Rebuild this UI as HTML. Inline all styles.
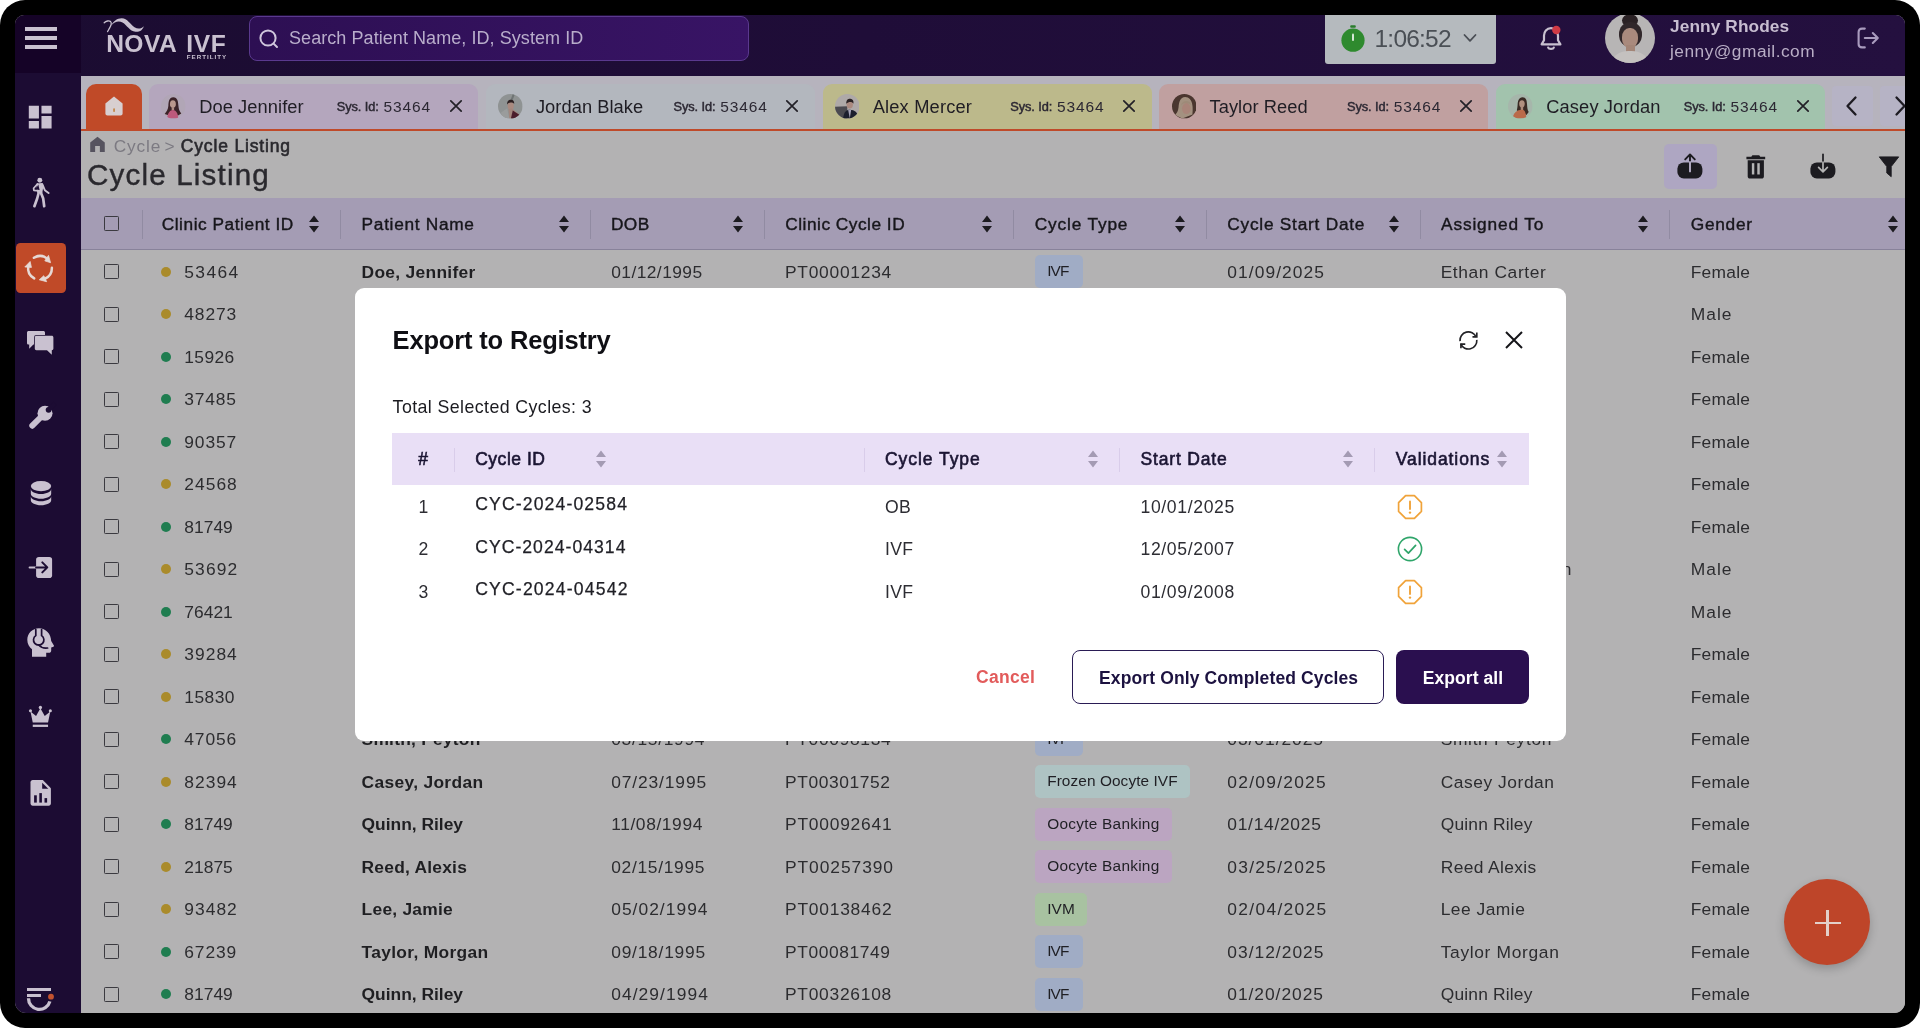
<!DOCTYPE html>
<html lang="en"><head><meta charset="utf-8"><title>Cycle Listing - Export to Registry</title><style>
html,body{margin:0;padding:0;background:#fff;}
body{width:1920px;height:1028px;overflow:hidden;position:relative;font-family:"Liberation Sans",sans-serif;}
.frame{position:absolute;left:0;top:0;width:1920px;height:1028px;background:#000;border-radius:25px;}
.screen{position:absolute;left:15px;top:15px;width:1890px;height:997.500px;border-radius:9px 9px 11px 11px;overflow:hidden;background:#b3b2b3;}
.b{position:absolute;display:block;}
.t{position:absolute;white-space:nowrap;display:block;}
</style></head><body>
<div class="frame"><div class="screen">
<div class="b" style="left:-15px;top:-15px;width:1920px;height:1028px;will-change:transform;">
<div class="b" style="left:81.00px;top:76.00px;width:1824.00px;height:937.00px;background:#b3b2b3;"></div>
<div class="b" style="left:81.00px;top:76.00px;width:1824.00px;height:53.00px;background:#b6b3bd;"></div>
<div class="b" style="left:15.00px;top:15.00px;width:1890.00px;height:61.00px;background:linear-gradient(90deg,#1b0c31 0%,#1f0d38 45%,#24103f 100%);"></div>
<div class="b" style="left:15.00px;top:15.00px;width:66.00px;height:57.50px;background:#150327;"></div>
<div class="b" style="left:15.00px;top:72.50px;width:66.00px;height:941.00px;background:#1c0c33;"></div>
<div class="b" style="left:25.00px;top:27.25px;width:32.00px;height:3.50px;background:#c9c1d0;"></div>
<div class="b" style="left:25.00px;top:36.25px;width:32.00px;height:3.50px;background:#c9c1d0;"></div>
<div class="b" style="left:25.00px;top:45.25px;width:32.00px;height:3.50px;background:#c9c1d0;"></div>
<svg class="b" style="left:103.00px;top:17.00px;" width="42.00" height="17.00" viewBox="0 0 42 17"><path d="M8.200 8.400 C10.500 4 14.500 1.200 18.800 1.300 C24.500 1.500 27 7.200 31.500 10.200 C35 12.400 38.500 11.600 40.800 9.200 C39.800 13 36.500 15.200 32.500 14.800 C26.500 14.200 24 8.200 19.500 5.600 C15.500 3.400 11.500 5 8.200 8.400 Z" fill="#c9c1d0"/><path d="M1.200 5.800 C3 4 6 3.200 7.600 4.600 C9 6 7.800 9 6.400 11.400 C5.600 12.800 4.800 14 4.600 14.600" fill="none" stroke="#c9c1d0" stroke-width="1.300" stroke-linecap="round"/></svg>
<span class="t" style="left:106.20px;top:26.88px;font-size:24.60px;line-height:34px;color:#c9c1d0;font-weight:700;letter-spacing:0.419px;">NOVA</span>
<span class="t" style="left:186.20px;top:26.88px;font-size:24.60px;line-height:34px;color:#c9c1d0;font-weight:700;letter-spacing:0.618px;">IVF</span>
<span class="t" style="left:186.80px;top:52.37px;font-size:6.20px;line-height:9px;color:#c9c1d0;font-weight:700;letter-spacing:1.017px;">FERTILITY</span>
<div class="b" style="left:249.00px;top:16.00px;width:500.00px;height:44.50px;border-radius:8.0px;background:linear-gradient(90deg,#2d0f53 0%,#381465 100%);border:1px solid #5a398e;box-sizing:border-box;"></div>
<svg class="b" style="left:257.00px;top:27.00px;" width="24.00" height="24.00" viewBox="0 0 24 24"><circle cx="11" cy="11" r="7.6" fill="none" stroke="#cfc6dc" stroke-width="2"/><path d="M16.6 16.6 L20 20" stroke="#cfc6dc" stroke-width="2" stroke-linecap="round"/></svg>
<span class="t" style="left:289.00px;top:26.01px;font-size:18.00px;line-height:25px;color:#b9aecb;letter-spacing:0.064px;">Search Patient Name, ID, System ID</span>
<div class="b" style="left:1325.00px;top:15.00px;width:171.00px;height:48.50px;background:#b5babe;border-radius:0 0 3px 3px;"></div>
<svg class="b" style="left:1338.00px;top:24.00px;" width="30.00" height="30.00" viewBox="0 0 30 30"><rect x="12.2" y="1.2" width="5.6" height="2.6" rx="1" fill="#2a7d2c"/><circle cx="15" cy="16.2" r="11.6" fill="#2e8a2e"/><rect x="14" y="9.5" width="2" height="7.5" rx="1" fill="#d5e8d5"/></svg>
<span class="t" style="left:1374.50px;top:22.18px;font-size:24.50px;line-height:34px;color:#4a4f55;letter-spacing:-0.774px;">1:06:52</span>
<svg class="b" style="left:1461.00px;top:30.00px;" width="18.00" height="16.00" viewBox="0 0 18 16"><path d="M3.5 5 L9 10.8 L14.5 5" fill="none" stroke="#4a4e55" stroke-width="1.8" stroke-linecap="round" stroke-linejoin="round"/></svg>
<svg class="b" style="left:1536.00px;top:24.00px;" width="30.00" height="30.00" viewBox="0 0 30 30"><path d="M15 4.2 C10.6 4.2 8 7.6 8 11.6 L8 16.2 L5.6 20.4 L24.4 20.4 L22 16.2 L22 11.6 C22 7.6 19.4 4.2 15 4.2 Z" fill="none" stroke="#c9c1d0" stroke-width="2.2" stroke-linejoin="round"/><path d="M12.2 23.6 C12.8 25.4 17.2 25.4 17.8 23.6" fill="none" stroke="#c9c1d0" stroke-width="2.2" stroke-linecap="round"/><circle cx="20.3" cy="6" r="4.2" fill="#cf3a45"/></svg>
<div class="b" style="left:1605.00px;top:13.20px;width:50.00px;height:50.00px;border-radius:50%;overflow:hidden;background:#b7b5b5;"><div class="b" style="left:17px;top:1px;width:16px;height:13px;border-radius:50%;background:#2a2124"></div><div class="b" style="left:13.500px;top:9px;width:23px;height:25px;border-radius:48%;background:#30272a"></div><div class="b" style="left:17px;top:15px;width:16px;height:20px;border-radius:45%;background:#a98a7d"></div><div class="b" style="left:20.500px;top:32px;width:9px;height:8px;background:#a38577"></div><div class="b" style="left:8px;top:38px;width:34px;height:22px;border-radius:45% 45% 0 0;background:#c4c1bf"></div></div>
<span class="t" style="left:1670.00px;top:14.20px;font-size:17.30px;line-height:24px;color:#c7bdd0;font-weight:700;letter-spacing:0.094px;">Jenny Rhodes</span>
<span class="t" style="left:1670.00px;top:38.70px;font-size:17.30px;line-height:24px;color:#b9aec6;letter-spacing:0.502px;">jenny@gmail.com</span>
<svg class="b" style="left:1853.50px;top:24.00px;" width="28.00" height="28.00" viewBox="0 0 28 28"><path d="M10.800 4.600 L8 4.600 C5.800 4.600 4.600 5.800 4.600 8 L4.600 20 C4.600 22.200 5.800 23.400 8 23.400 L10.800 23.400" fill="none" stroke="#a99bbe" stroke-width="2.100" stroke-linecap="round"/><path d="M10.800 14 L23.600 14 M18.800 9 L23.800 14 L18.800 19" fill="none" stroke="#a99bbe" stroke-width="2.100" stroke-linecap="round" stroke-linejoin="round"/></svg>
<svg class="b" style="left:25.10px;top:102.20px;" width="30.40" height="30.40" viewBox="0 0 24 24"><path d="M3 13h8V3H3v10zm0 8h8v-6H3v6zm10 0h8V11h-8v10zm0-18v6h8V3h-8z" fill="#c9c1d0"/></svg>
<svg class="b" style="left:28.00px;top:174.00px;" width="26.00" height="36.00" viewBox="28 174 26 36"><circle cx="39.800" cy="180.200" r="2.450" fill="#c9c1d0"/><path d="M37 184 L42.300 183.700 L42.600 187 L41.800 192.300 L37.800 192.300 Z" fill="#c9c1d0" stroke="#c9c1d0" stroke-width="1.200" stroke-linejoin="round"/><path d="M38.300 184.400 L35.600 189.600 L39.600 190" fill="#1c0c33"/><path d="M37.400 184 L33.600 188.200 L33.900 190.400 L38.600 190.800" fill="none" stroke="#c9c1d0" stroke-width="1.700" stroke-linecap="round" stroke-linejoin="round"/><path d="M42.500 184.600 L44.800 190.200 L48.600 193.100" fill="none" stroke="#c9c1d0" stroke-width="1.900" stroke-linecap="round" stroke-linejoin="round"/><path d="M38.900 192 L37.200 198.500 L34.400 206.200" fill="none" stroke="#c9c1d0" stroke-width="2.700" stroke-linecap="round" stroke-linejoin="round"/><path d="M40.600 192 L43.200 198.600 L44.200 206.200" fill="none" stroke="#c9c1d0" stroke-width="2.700" stroke-linecap="round" stroke-linejoin="round"/></svg>
<div class="b" style="left:15.90px;top:242.50px;width:50.10px;height:50.10px;background:#c04a28;border-radius:4.5px;"></div>
<svg class="b" style="left:24.30px;top:252.10px;" width="32.00" height="32.00" viewBox="24.30 252.10 32 32"><path d="M34.17 257.90 A11.90 11.90 0 0 1 47.63 258.72" fill="none" stroke="#e6d9d5" stroke-width="2.50" stroke-linecap="round"/><path d="M48.80 255.50 L45.11 260.97 L50.87 262.80 Z" fill="#e6d9d5" stroke="#e6d9d5" stroke-width="0.8" stroke-linejoin="round"/><path d="M52.20 267.89 A11.90 11.90 0 0 1 44.76 279.13" fill="none" stroke="#e6d9d5" stroke-width="2.50" stroke-linecap="round"/><path d="M46.96 281.76 L44.07 275.83 L39.60 279.90 Z" fill="#e6d9d5" stroke="#e6d9d5" stroke-width="0.8" stroke-linejoin="round"/><path d="M34.53 278.51 A11.90 11.90 0 0 1 28.52 266.44" fill="none" stroke="#e6d9d5" stroke-width="2.50" stroke-linecap="round"/><path d="M25.14 267.04 L31.72 267.50 L30.43 261.60 Z" fill="#e6d9d5" stroke="#e6d9d5" stroke-width="0.8" stroke-linejoin="round"/></svg>
<svg class="b" style="left:27.30px;top:330.80px;" width="26.40" height="24.00" viewBox="0 0 26.400 24"><path d="M1.600 0 H16.400 c.9 0 1.600.7 1.600 1.600 V12 c0 .9-.7 1.600-1.600 1.600 H6.400 L2.200 17.800 V13.600 H1.600 C.7 13.600 0 12.900 0 12 V1.600 C0 .7.7 0 1.600 0z" fill="#c9c1d0"/><path d="M9.400 4.800 H24.800 c.9 0 1.600.7 1.600 1.600 V17.600 c0 .9-.7 1.600-1.600 1.600 V23.800 L20 19.200 H9.400 c-.9 0-1.600-.7-1.600-1.600 V6.400 c0-.9.7-1.600 1.600-1.600z" fill="#c9c1d0" stroke="#1b0c30" stroke-width="1.500" paint-order="stroke"/></svg>
<svg class="b" style="left:24.00px;top:400.00px;" width="34.00" height="34.00" viewBox="24 400 34 34"><path d="M32.300 425.700 L42.500 415.500" stroke="#c9c1d0" stroke-width="6" stroke-linecap="round"/><circle cx="45" cy="413.300" r="7.500" fill="#c9c1d0"/><circle cx="48.600" cy="409.800" r="2.900" fill="#1c0c33"/><path d="M49.200 409.200 L55 403.400" stroke="#1c0c33" stroke-width="4.600"/></svg>
<svg class="b" style="left:27.50px;top:480.00px;" width="26.00" height="26.00" viewBox="0 0 24 24"><ellipse cx="12" cy="5.600" rx="9.400" ry="4.700" fill="#c9c1d0"/><path d="M2.600 8.400 v4.200 c0 2.500 4.200 4.600 9.400 4.600 s9.400-2.100 9.400-4.600 V8.400 c0 2.500-4.200 4.600-9.400 4.600 s-9.400-2.100-9.400-4.600z" fill="#c9c1d0"/><path d="M2.600 15 v3.800 c0 2.500 4.200 4.600 9.400 4.600 s9.400-2.100 9.400-4.600 v-3.800 c0 2.500-4.200 4.600-9.400 4.600 s-9.400-2.100-9.400-4.600z" fill="#c9c1d0"/></svg>
<svg class="b" style="left:26.00px;top:554.00px;" width="30.00" height="28.00" viewBox="26 554 30 28"><rect x="36.100" y="556.900" width="16" height="21.100" rx="2.800" fill="#c9c1d0"/><path d="M29.600 567.400 H36.500" stroke="#c9c1d0" stroke-width="2" stroke-linecap="round"/><path d="M36.100 567.400 H47 M42.300 562.400 L47.300 567.400 L42.300 572.400" fill="none" stroke="#1c0c33" stroke-width="2" stroke-linecap="round" stroke-linejoin="round"/></svg>
<svg class="b" style="left:24.00px;top:624.00px;" width="34.00" height="36.00" viewBox="24 624 34 36"><path d="M39 628.200 C32.500 628.200 27.300 633.300 27.300 639.800 c0 4 2 7.400 4.700 9.400 V656.800 H46.200 V652.800 h2.600 c1.400 0 2.400-1 2.400-2.400 V647.600 l2.300-.9 c.5-.2.600-.7.400-1.100 L51.200 641 C51 633.800 45.800 628.200 39 628.200z" fill="#c9c1d0"/><g fill="none" stroke="#1c0c33" stroke-width="1.700" stroke-linecap="round"><path d="M35.800 629.600 V635.600 A5.200 5.200 0 1 0 41.600 635.600 V629.600"/><path d="M38.700 645 C41 647.600 44.500 648.400 47.600 648"/></g></svg>
<svg class="b" style="left:28.30px;top:704.30px;" width="24.80" height="24.80" viewBox="0 0 24 24"><path d="M2.400 7.200 L7.800 11.600 L12 4.200 L16.200 11.600 L21.600 7.200 L19.400 18 H4.600 Z" fill="#c9c1d0"/><circle cx="2.400" cy="6.600" r="1.500" fill="#c9c1d0"/><circle cx="12" cy="3.400" r="1.600" fill="#c9c1d0"/><circle cx="21.600" cy="6.600" r="1.500" fill="#c9c1d0"/><rect x="4.600" y="20" width="14.800" height="2.200" fill="#c9c1d0"/></svg>
<svg class="b" style="left:28.00px;top:778.00px;" width="26.00" height="30.00" viewBox="28 778 26 30"><path d="M32.700 780 H42.800 L50.900 788.300 V803.500 c0 1.200-1 2.200-2.200 2.200 H32.700 c-1.200 0-2.200-1-2.200-2.200 V782.200 c0-1.200 1-2.200 2.200-2.200z" fill="#c9c1d0"/><path d="M42.200 782.800 V788.800 H48.300 Z" fill="#1c0c33"/><g fill="#1c0c33"><rect x="34.100" y="795.300" width="2.700" height="7.300"/><rect x="39.300" y="793.100" width="2.600" height="9.500"/><rect x="44.500" y="798.100" width="2.600" height="4.500"/></g></svg>
<div class="b" style="left:26.90px;top:988.10px;width:24.10px;height:3.30px;background:#c9c1d0;"></div>
<div class="b" style="left:26.90px;top:993.75px;width:14.20px;height:3.30px;background:#c9c1d0;"></div>
<svg class="b" style="left:20.00px;top:985.00px;" width="40.00" height="30.00" viewBox="20 985 40 30"><path d="M28.500 998.300 A10.900 10.900 0 0 0 49.900 1001.400" fill="none" stroke="#c9c1d0" stroke-width="3.300"/><circle cx="51" cy="996.700" r="2.900" fill="#c4532f"/></svg>
<div class="b" style="left:86.00px;top:84.00px;width:55.50px;height:45.00px;background:#c04a28;border-radius:10px 10px 0 0;"></div>
<svg class="b" style="left:101.50px;top:94.20px;" width="24.00" height="24.00" viewBox="0 0 24 24"><path d="M12 2.600 L3.400 9.400 V19.400 c0 1.100.9 2 2 2 H18.600 c1.100 0 2-.9 2-2 V9.400 Z" fill="#d8cfd0"/><rect x="11.300" y="14.200" width="1.500" height="3.800" rx=".7" fill="#c07a30"/></svg>
<div class="b" style="left:81.00px;top:128.50px;width:1824.00px;height:2.90px;background:#bf4a2a;"></div>
<div class="b" style="left:149.00px;top:84.00px;width:329.00px;height:45.00px;background:#b4a6bd;border-radius:9px 9px 0 0;"></div>
<svg class="b" style="left:161.30px;top:94.00px;" width="24.60" height="24.60" viewBox="0 0 24 24"><defs><clipPath id="av1"><circle cx="12" cy="12" r="12"/></clipPath></defs><g clip-path="url(#av1)"><rect width="24" height="24" fill="#b1a6b6"/><path d="M12 3.200 C7.800 3.200 7.400 7.600 7.200 11.400 C7 15 5.200 17.400 3.600 19.400 L8 21 L16.600 21 L19.800 19 C18 16.800 17.200 14.600 17 11.400 C16.800 7.600 16.200 3.200 12 3.200z" fill="#3b2328"/><ellipse cx="11.600" cy="9.800" rx="2.900" ry="3.700" fill="#b9978d"/><rect x="10.400" y="12.800" width="2.400" height="3" fill="#b08d84"/><path d="M6 24 C6.200 18.600 9 15.600 11.600 15.600 C14.400 15.600 16.600 18.400 16.800 24z" fill="#bd5a7c"/></g></svg>
<span class="t" style="left:199.20px;top:93.51px;font-size:18.30px;line-height:26px;color:#1f1d24;letter-spacing:0.078px;">Doe Jennifer</span>
<span class="t" style="left:336.80px;top:97.95px;font-size:12.80px;line-height:18px;color:#2c2833;letter-spacing:-0.086px;-webkit-text-stroke:0.450px #2c2833;">Sys. Id:</span>
<span class="t" style="left:383.50px;top:95.78px;font-size:15.50px;line-height:22px;color:#2c2833;letter-spacing:0.849px;">53464</span>
<svg class="b" style="left:447.50px;top:98.00px;" width="16.00" height="16.00" viewBox="0 0 16 16"><path d="M2.800 2.800 L13.200 13.200 M13.200 2.800 L2.800 13.200" stroke="#222027" stroke-width="1.700" stroke-linecap="round"/></svg>
<div class="b" style="left:485.75px;top:84.00px;width:329.00px;height:45.00px;background:#b3b7be;border-radius:9px 9px 0 0;"></div>
<svg class="b" style="left:498.05px;top:94.00px;" width="24.60" height="24.60" viewBox="0 0 24 24"><defs><clipPath id="av2"><circle cx="12" cy="12" r="12"/></clipPath></defs><g clip-path="url(#av2)"><rect width="24" height="24" fill="#8f9393"/><rect x="13" y="0" width="2" height="9" fill="#6f7474" transform="rotate(20 14 4)"/><ellipse cx="12.400" cy="11.400" rx="3" ry="3.800" fill="#a98a80"/><path d="M8.800 10.200 C8.800 6.600 11 5.400 12.800 5.600 C15 5.800 16 7.400 15.800 9.600 C14.600 8.200 11.600 7.800 10 9 z" fill="#2b1f21"/><path d="M10.200 15 L13.400 14 L21 20 L17 24 L11 24 z" fill="#a3867d"/><path d="M12.600 24 L14.400 16 L22 21 L20 24z" fill="#4b1d2c"/><path d="M3 18 L9 14 L11 24 L4 24z" fill="#9a9c9c"/></g></svg>
<span class="t" style="left:535.95px;top:93.51px;font-size:18.30px;line-height:26px;color:#1f1d24;letter-spacing:0.046px;">Jordan Blake</span>
<span class="t" style="left:673.55px;top:97.95px;font-size:12.80px;line-height:18px;color:#2c2833;letter-spacing:-0.086px;-webkit-text-stroke:0.450px #2c2833;">Sys. Id:</span>
<span class="t" style="left:720.25px;top:95.78px;font-size:15.50px;line-height:22px;color:#2c2833;letter-spacing:0.849px;">53464</span>
<svg class="b" style="left:784.25px;top:98.00px;" width="16.00" height="16.00" viewBox="0 0 16 16"><path d="M2.800 2.800 L13.200 13.200 M13.200 2.800 L2.800 13.200" stroke="#222027" stroke-width="1.700" stroke-linecap="round"/></svg>
<div class="b" style="left:822.50px;top:84.00px;width:329.00px;height:45.00px;background:#bcb98b;border-radius:9px 9px 0 0;"></div>
<svg class="b" style="left:834.80px;top:94.00px;" width="24.60" height="24.60" viewBox="0 0 24 24"><defs><clipPath id="av3"><circle cx="12" cy="12" r="12"/></clipPath></defs><g clip-path="url(#av3)"><rect width="24" height="24" fill="#aea9a8"/><path d="M0 12.500 L12 12 L12 24 L0 24z" fill="#4b4a50"/><path d="M8 24 C8.500 17.500 11 15.400 14.600 15.400 C19 15.400 22.400 18 23 24z" fill="#1c1f2e"/><path d="M12.800 15.400 L14.400 24 L15.800 15.400z" fill="#a6a3b8"/><ellipse cx="14.400" cy="10.200" rx="3.100" ry="4" fill="#ab8a80"/><path d="M11 9.400 C10.800 5.600 13 4.400 15 4.600 C17.400 4.800 18.400 6.800 18 9.400 C17 7.400 13.400 7 11 9.400z" fill="#2a2224"/></g></svg>
<span class="t" style="left:872.70px;top:93.51px;font-size:18.30px;line-height:26px;color:#1f1d24;letter-spacing:0.170px;">Alex Mercer</span>
<span class="t" style="left:1010.30px;top:97.95px;font-size:12.80px;line-height:18px;color:#2c2833;letter-spacing:-0.086px;-webkit-text-stroke:0.450px #2c2833;">Sys. Id:</span>
<span class="t" style="left:1057.00px;top:95.78px;font-size:15.50px;line-height:22px;color:#2c2833;letter-spacing:0.849px;">53464</span>
<svg class="b" style="left:1121.00px;top:98.00px;" width="16.00" height="16.00" viewBox="0 0 16 16"><path d="M2.800 2.800 L13.200 13.200 M13.200 2.800 L2.800 13.200" stroke="#222027" stroke-width="1.700" stroke-linecap="round"/></svg>
<div class="b" style="left:1159.25px;top:84.00px;width:329.00px;height:45.00px;background:#c0a0a0;border-radius:9px 9px 0 0;"></div>
<svg class="b" style="left:1171.55px;top:94.00px;" width="24.60" height="24.60" viewBox="0 0 24 24"><defs><clipPath id="av4"><circle cx="12" cy="12" r="12"/></clipPath></defs><g clip-path="url(#av4)"><rect width="24" height="24" fill="#4a362f"/><path d="M12.800 3 C8 3 6.800 8 6.400 13 C6 17 4.600 19 3 20.400 L10 24 L20 20 C20.600 14 20.800 3.400 12.800 3z" fill="#a39180"/><ellipse cx="14" cy="14.200" rx="4.200" ry="5.400" fill="#a98479"/><path d="M8.600 11.600 C10 8.600 15 7.600 19 11 C18 6 10 5 8.600 11.600z" fill="#9e8a78"/></g></svg>
<span class="t" style="left:1209.45px;top:93.51px;font-size:18.30px;line-height:26px;color:#1f1d24;letter-spacing:0.067px;">Taylor Reed</span>
<span class="t" style="left:1347.05px;top:97.95px;font-size:12.80px;line-height:18px;color:#2c2833;letter-spacing:-0.086px;-webkit-text-stroke:0.450px #2c2833;">Sys. Id:</span>
<span class="t" style="left:1393.75px;top:95.78px;font-size:15.50px;line-height:22px;color:#2c2833;letter-spacing:0.849px;">53464</span>
<svg class="b" style="left:1457.75px;top:98.00px;" width="16.00" height="16.00" viewBox="0 0 16 16"><path d="M2.800 2.800 L13.200 13.200 M13.200 2.800 L2.800 13.200" stroke="#222027" stroke-width="1.700" stroke-linecap="round"/></svg>
<div class="b" style="left:1496.00px;top:84.00px;width:329.00px;height:45.00px;background:#a2c3ad;border-radius:9px 9px 0 0;"></div>
<svg class="b" style="left:1508.30px;top:94.00px;" width="24.60" height="24.60" viewBox="0 0 24 24"><defs><clipPath id="av5"><circle cx="12" cy="12" r="12"/></clipPath></defs><g clip-path="url(#av5)"><rect width="24" height="24" fill="#a6b6ab"/><path d="M14.200 3.200 C10.400 3.200 9.600 7 9.400 10.600 C9.200 13.400 8.800 15 8.600 16 L18 20.400 L20.200 17.600 C18.800 15.400 18.800 12.600 18.600 10.200 C18.400 6.600 17.800 3.200 14.200 3.200z" fill="#3a2a24"/><ellipse cx="13.600" cy="9.600" rx="2.700" ry="3.600" fill="#b0907f"/><rect x="12.400" y="12.400" width="2.400" height="3.400" fill="#ab8a7a"/><path d="M4.600 24 C5 18.400 9 15.400 13.600 15.400 C16.400 15.400 17.600 18 17.800 24z" fill="#ba6a4a"/></g></svg>
<span class="t" style="left:1546.20px;top:93.51px;font-size:18.30px;line-height:26px;color:#1f1d24;letter-spacing:0.128px;">Casey Jordan</span>
<span class="t" style="left:1683.80px;top:97.95px;font-size:12.80px;line-height:18px;color:#2c2833;letter-spacing:-0.086px;-webkit-text-stroke:0.450px #2c2833;">Sys. Id:</span>
<span class="t" style="left:1730.50px;top:95.78px;font-size:15.50px;line-height:22px;color:#2c2833;letter-spacing:0.849px;">53464</span>
<svg class="b" style="left:1794.50px;top:98.00px;" width="16.00" height="16.00" viewBox="0 0 16 16"><path d="M2.800 2.800 L13.200 13.200 M13.200 2.800 L2.800 13.200" stroke="#222027" stroke-width="1.700" stroke-linecap="round"/></svg>
<div class="b" style="left:1832.00px;top:86.00px;width:40.50px;height:40.00px;background:#b6b3c5;border-radius:4.0px;"></div>
<svg class="b" style="left:1840.00px;top:94.00px;" width="24.00" height="24.00" viewBox="0 0 24 24"><path d="M15.500 3.500 L7.500 12 L15.500 20.500" fill="none" stroke="#1d1b22" stroke-width="2.300" stroke-linecap="round" stroke-linejoin="round"/></svg>
<div class="b" style="left:1880.00px;top:86.00px;width:40.50px;height:40.00px;background:#b6b3c5;border-radius:4.0px;"></div>
<svg class="b" style="left:1888.00px;top:94.00px;" width="24.00" height="24.00" viewBox="0 0 24 24"><path d="M8.500 3.500 L16.500 12 L8.500 20.500" fill="none" stroke="#1d1b22" stroke-width="2.300" stroke-linecap="round" stroke-linejoin="round"/></svg>
<svg class="b" style="left:88.00px;top:135.30px;" width="19.00" height="19.00" viewBox="0 0 24 24"><path d="M12 2.200 L2.800 9.600 V21.500 H9 V14 h6 v7.500 h6.200 V9.600 Z" fill="#56535f"/></svg>
<span class="t" style="left:113.70px;top:134.20px;font-size:17.30px;line-height:24px;color:#7c7a82;letter-spacing:0.880px;">Cycle</span>
<span class="t" style="left:164.50px;top:134.20px;font-size:17.30px;line-height:24px;color:#7c7a82;">&gt;</span>
<span class="t" style="left:180.80px;top:134.00px;font-size:17.50px;line-height:24px;color:#2a292e;letter-spacing:0.840px;-webkit-text-stroke:0.600px #2a292e;">Cycle Listing</span>
<span class="t" style="left:87.00px;top:154.44px;font-size:29.60px;line-height:41px;color:#2a292e;letter-spacing:1.169px;-webkit-text-stroke:0.400px #2a292e;">Cycle Listing</span>
<div class="b" style="left:1663.50px;top:144.00px;width:53.50px;height:44.70px;background:#aea6c2;border-radius:5.0px;"></div>
<svg class="b" style="left:1675.00px;top:152.00px;" width="30.00" height="30.00" viewBox="0 0 30 30"><rect x="2.400" y="10.400" width="25" height="16" rx="6.400" fill="#1c1b20"/><path d="M15 3 V10.400 M10.200 7.400 L15 2.400 L19.800 7.400" fill="none" stroke="#1c1b20" stroke-width="1.900" stroke-linecap="round" stroke-linejoin="round"/><path d="M15 10 V19.400" stroke="#b8b0c9" stroke-width="1.900" stroke-linecap="round"/></svg>
<svg class="b" style="left:1743.30px;top:153.70px;" width="25.60" height="25.60" viewBox="0 0 24 24"><path d="M8.800 1.200 h6.400 l1 1.300 h4.600 v2.400 H3.200 V2.500 h4.600z" fill="#1c1b20"/><path d="M4.400 5.900 H19.600 V21 c0 1.100-.9 2-2 2 H6.400 c-1.100 0-2-.9-2-2z" fill="#1c1b20"/><rect x="8.300" y="8.600" width="2.300" height="10.600" fill="#b5b5b5"/><rect x="13.400" y="8.600" width="2.300" height="10.600" fill="#b5b5b5"/></svg>
<svg class="b" style="left:1807.50px;top:152.00px;" width="30.00" height="30.00" viewBox="0 0 30 30"><rect x="2.400" y="10.400" width="25" height="16" rx="6.400" fill="#1c1b20"/><path d="M15 2.400 V10.400" stroke="#1c1b20" stroke-width="1.700" stroke-linecap="round"/><path d="M15 10 V19.600 M10.600 15.400 L15 19.800 L19.400 15.400" fill="none" stroke="#b5b5b5" stroke-width="1.700" stroke-linecap="round" stroke-linejoin="round"/></svg>
<svg class="b" style="left:1878.00px;top:153.50px;" width="22.00" height="25.00" viewBox="0 0 24 25"><path d="M1.400 2 H22.600 L14.400 12.600 V23.600 L9.600 19.600 V12.600 Z" fill="#1c1b20" stroke="#1c1b20" stroke-width="1" stroke-linejoin="round"/></svg>
<div class="b" style="left:81.00px;top:197.50px;width:1824.00px;height:51.50px;background:#a49cb4;"></div>
<div class="b" style="left:81.00px;top:248.70px;width:1824.00px;height:1.00px;background:#88829a;"></div>
<div class="b" style="left:104.00px;top:216.30px;width:15.00px;height:15.00px;border-radius:1.3px;border:1.400px solid #3b3a40;box-sizing:border-box;"></div>
<div class="b" style="left:141.60px;top:210.00px;width:1.00px;height:29.00px;background:#918ba2;"></div>
<span class="t" style="left:161.70px;top:211.90px;font-size:17.30px;line-height:24px;color:#17161b;letter-spacing:0.544px;-webkit-text-stroke:0.400px #17161b;">Clinic Patient ID</span>
<svg class="b" style="left:308.00px;top:213.60px;" width="12.00" height="20.00" viewBox="0 0 12 20"><path d="M6 1.600 L11 8 H1 Z M6 18.400 L1 12 H11 Z" fill="#1c1b20"/></svg>
<div class="b" style="left:340.20px;top:210.00px;width:1.00px;height:29.00px;background:#918ba2;"></div>
<span class="t" style="left:361.60px;top:211.90px;font-size:17.30px;line-height:24px;color:#17161b;letter-spacing:0.697px;-webkit-text-stroke:0.400px #17161b;">Patient Name</span>
<svg class="b" style="left:557.70px;top:213.60px;" width="12.00" height="20.00" viewBox="0 0 12 20"><path d="M6 1.600 L11 8 H1 Z M6 18.400 L1 12 H11 Z" fill="#1c1b20"/></svg>
<div class="b" style="left:589.60px;top:210.00px;width:1.00px;height:29.00px;background:#918ba2;"></div>
<span class="t" style="left:611.00px;top:211.90px;font-size:17.30px;line-height:24px;color:#17161b;letter-spacing:0.394px;-webkit-text-stroke:0.400px #17161b;">DOB</span>
<svg class="b" style="left:731.50px;top:213.60px;" width="12.00" height="20.00" viewBox="0 0 12 20"><path d="M6 1.600 L11 8 H1 Z M6 18.400 L1 12 H11 Z" fill="#1c1b20"/></svg>
<div class="b" style="left:763.90px;top:210.00px;width:1.00px;height:29.00px;background:#918ba2;"></div>
<span class="t" style="left:785.30px;top:211.90px;font-size:17.30px;line-height:24px;color:#17161b;letter-spacing:0.501px;-webkit-text-stroke:0.400px #17161b;">Clinic Cycle ID</span>
<svg class="b" style="left:981.40px;top:213.60px;" width="12.00" height="20.00" viewBox="0 0 12 20"><path d="M6 1.600 L11 8 H1 Z M6 18.400 L1 12 H11 Z" fill="#1c1b20"/></svg>
<div class="b" style="left:1013.10px;top:210.00px;width:1.00px;height:29.00px;background:#918ba2;"></div>
<span class="t" style="left:1034.80px;top:211.90px;font-size:17.30px;line-height:24px;color:#17161b;letter-spacing:0.835px;-webkit-text-stroke:0.400px #17161b;">Cycle Type</span>
<svg class="b" style="left:1173.80px;top:213.60px;" width="12.00" height="20.00" viewBox="0 0 12 20"><path d="M6 1.600 L11 8 H1 Z M6 18.400 L1 12 H11 Z" fill="#1c1b20"/></svg>
<div class="b" style="left:1205.60px;top:210.00px;width:1.00px;height:29.00px;background:#918ba2;"></div>
<span class="t" style="left:1227.30px;top:211.90px;font-size:17.30px;line-height:24px;color:#17161b;letter-spacing:0.755px;-webkit-text-stroke:0.400px #17161b;">Cycle Start Date</span>
<svg class="b" style="left:1387.60px;top:213.60px;" width="12.00" height="20.00" viewBox="0 0 12 20"><path d="M6 1.600 L11 8 H1 Z M6 18.400 L1 12 H11 Z" fill="#1c1b20"/></svg>
<div class="b" style="left:1419.60px;top:210.00px;width:1.00px;height:29.00px;background:#918ba2;"></div>
<span class="t" style="left:1441.00px;top:211.90px;font-size:17.30px;line-height:24px;color:#17161b;letter-spacing:0.864px;-webkit-text-stroke:0.400px #17161b;">Assigned To</span>
<svg class="b" style="left:1637.20px;top:213.60px;" width="12.00" height="20.00" viewBox="0 0 12 20"><path d="M6 1.600 L11 8 H1 Z M6 18.400 L1 12 H11 Z" fill="#1c1b20"/></svg>
<div class="b" style="left:1669.30px;top:210.00px;width:1.00px;height:29.00px;background:#918ba2;"></div>
<span class="t" style="left:1690.70px;top:211.90px;font-size:17.30px;line-height:24px;color:#17161b;letter-spacing:0.755px;-webkit-text-stroke:0.400px #17161b;">Gender</span>
<svg class="b" style="left:1886.80px;top:213.60px;" width="12.00" height="20.00" viewBox="0 0 12 20"><path d="M6 1.600 L11 8 H1 Z M6 18.400 L1 12 H11 Z" fill="#1c1b20"/></svg>
<div class="b" style="left:104.00px;top:264.20px;width:15.00px;height:15.00px;border-radius:1.3px;border:1.400px solid #3b3a40;box-sizing:border-box;"></div>
<div class="b" style="left:161.00px;top:266.90px;width:10.00px;height:10.00px;background:#aa8b2b;border-radius:50%;"></div>
<span class="t" style="left:184.30px;top:259.50px;font-size:17.40px;line-height:24px;color:#2c2c2f;letter-spacing:1.374px;">53464</span>
<span class="t" style="left:361.60px;top:259.50px;font-size:17.40px;line-height:24px;color:#1f1f22;font-weight:700;letter-spacing:0.296px;">Doe, Jennifer</span>
<span class="t" style="left:611.20px;top:259.50px;font-size:17.40px;line-height:24px;color:#2c2c2f;letter-spacing:0.433px;">01/12/1995</span>
<span class="t" style="left:785.00px;top:259.50px;font-size:17.40px;line-height:24px;color:#2c2c2f;letter-spacing:0.737px;">PT00001234</span>
<div class="b" style="left:1034.50px;top:255.20px;width:48.50px;height:33.00px;background:#a0acc5;border-radius:5.0px;"></div>
<span class="t" style="left:1047.20px;top:260.28px;font-size:15.40px;line-height:22px;color:#1f1f24;letter-spacing:-0.882px;">IVF</span>
<span class="t" style="left:1227.30px;top:259.50px;font-size:17.40px;line-height:24px;color:#2c2c2f;letter-spacing:1.077px;">01/09/2025</span>
<span class="t" style="left:1440.70px;top:259.50px;font-size:17.40px;line-height:24px;color:#2c2c2f;letter-spacing:0.585px;">Ethan Carter</span>
<span class="t" style="left:1690.70px;top:259.50px;font-size:17.40px;line-height:24px;color:#2c2c2f;letter-spacing:0.252px;">Female</span>
<div class="b" style="left:104.00px;top:306.70px;width:15.00px;height:15.00px;border-radius:1.3px;border:1.400px solid #3b3a40;box-sizing:border-box;"></div>
<div class="b" style="left:161.00px;top:309.40px;width:10.00px;height:10.00px;background:#aa8b2b;border-radius:50%;"></div>
<span class="t" style="left:184.30px;top:302.00px;font-size:17.40px;line-height:24px;color:#2c2c2f;letter-spacing:0.874px;">48273</span>
<span class="t" style="left:361.60px;top:302.00px;font-size:17.40px;line-height:24px;color:#1f1f22;font-weight:700;letter-spacing:0.100px;">Blake, Jordan</span>
<span class="t" style="left:611.20px;top:302.00px;font-size:17.40px;line-height:24px;color:#2c2c2f;letter-spacing:0.700px;">03/22/1993</span>
<span class="t" style="left:785.00px;top:302.00px;font-size:17.40px;line-height:24px;color:#2c2c2f;letter-spacing:0.800px;">PT00004521</span>
<div class="b" style="left:1034.50px;top:297.70px;width:48.50px;height:33.00px;background:#a0acc5;border-radius:5.0px;"></div>
<span class="t" style="left:1047.20px;top:302.78px;font-size:15.40px;line-height:22px;color:#1f1f24;letter-spacing:-0.882px;">IVF</span>
<span class="t" style="left:1227.30px;top:302.00px;font-size:17.40px;line-height:24px;color:#2c2c2f;letter-spacing:0.800px;">01/11/2025</span>
<span class="t" style="left:1440.70px;top:302.00px;font-size:17.40px;line-height:24px;color:#2c2c2f;letter-spacing:0.300px;">Logan Pierce</span>
<span class="t" style="left:1690.70px;top:302.00px;font-size:17.40px;line-height:24px;color:#2c2c2f;letter-spacing:1.022px;">Male</span>
<div class="b" style="left:104.00px;top:349.20px;width:15.00px;height:15.00px;border-radius:1.3px;border:1.400px solid #3b3a40;box-sizing:border-box;"></div>
<div class="b" style="left:161.00px;top:351.90px;width:10.00px;height:10.00px;background:#1f7d50;border-radius:50%;"></div>
<span class="t" style="left:184.30px;top:344.50px;font-size:17.40px;line-height:24px;color:#2c2c2f;letter-spacing:0.399px;">15926</span>
<span class="t" style="left:361.60px;top:344.50px;font-size:17.40px;line-height:24px;color:#1f1f22;font-weight:700;letter-spacing:0.100px;">Mercer, Alex</span>
<span class="t" style="left:611.20px;top:344.50px;font-size:17.40px;line-height:24px;color:#2c2c2f;letter-spacing:0.700px;">08/05/1994</span>
<span class="t" style="left:785.00px;top:344.50px;font-size:17.40px;line-height:24px;color:#2c2c2f;letter-spacing:0.800px;">PT00012876</span>
<div class="b" style="left:1034.50px;top:340.20px;width:52.70px;height:33.00px;background:#a8c2a1;border-radius:5.0px;"></div>
<span class="t" style="left:1047.20px;top:345.28px;font-size:15.40px;line-height:22px;color:#1f1f24;letter-spacing:0.157px;">IVM</span>
<span class="t" style="left:1227.30px;top:344.50px;font-size:17.40px;line-height:24px;color:#2c2c2f;letter-spacing:0.800px;">01/15/2025</span>
<span class="t" style="left:1440.70px;top:344.50px;font-size:17.40px;line-height:24px;color:#2c2c2f;letter-spacing:0.585px;">Ethan Carter</span>
<span class="t" style="left:1690.70px;top:344.50px;font-size:17.40px;line-height:24px;color:#2c2c2f;letter-spacing:0.252px;">Female</span>
<div class="b" style="left:104.00px;top:391.70px;width:15.00px;height:15.00px;border-radius:1.3px;border:1.400px solid #3b3a40;box-sizing:border-box;"></div>
<div class="b" style="left:161.00px;top:394.40px;width:10.00px;height:10.00px;background:#1f7d50;border-radius:50%;"></div>
<span class="t" style="left:184.30px;top:387.00px;font-size:17.40px;line-height:24px;color:#2c2c2f;letter-spacing:0.799px;">37485</span>
<span class="t" style="left:361.60px;top:387.00px;font-size:17.40px;line-height:24px;color:#1f1f22;font-weight:700;letter-spacing:0.100px;">Reed, Taylor</span>
<span class="t" style="left:611.20px;top:387.00px;font-size:17.40px;line-height:24px;color:#2c2c2f;letter-spacing:0.700px;">12/17/1995</span>
<span class="t" style="left:785.00px;top:387.00px;font-size:17.40px;line-height:24px;color:#2c2c2f;letter-spacing:0.800px;">PT00023451</span>
<div class="b" style="left:1034.50px;top:382.70px;width:48.50px;height:33.00px;background:#a0acc5;border-radius:5.0px;"></div>
<span class="t" style="left:1047.20px;top:387.78px;font-size:15.40px;line-height:22px;color:#1f1f24;letter-spacing:-0.882px;">IVF</span>
<span class="t" style="left:1227.30px;top:387.00px;font-size:17.40px;line-height:24px;color:#2c2c2f;letter-spacing:0.800px;">01/18/2025</span>
<span class="t" style="left:1440.70px;top:387.00px;font-size:17.40px;line-height:24px;color:#2c2c2f;letter-spacing:0.184px;">Quinn Riley</span>
<span class="t" style="left:1690.70px;top:387.00px;font-size:17.40px;line-height:24px;color:#2c2c2f;letter-spacing:0.252px;">Female</span>
<div class="b" style="left:104.00px;top:434.20px;width:15.00px;height:15.00px;border-radius:1.3px;border:1.400px solid #3b3a40;box-sizing:border-box;"></div>
<div class="b" style="left:161.00px;top:436.90px;width:10.00px;height:10.00px;background:#1f7d50;border-radius:50%;"></div>
<span class="t" style="left:184.30px;top:429.50px;font-size:17.40px;line-height:24px;color:#2c2c2f;letter-spacing:0.874px;">90357</span>
<span class="t" style="left:361.60px;top:429.50px;font-size:17.40px;line-height:24px;color:#1f1f22;font-weight:700;letter-spacing:0.100px;">Jordan, Casey</span>
<span class="t" style="left:611.20px;top:429.50px;font-size:17.40px;line-height:24px;color:#2c2c2f;letter-spacing:0.700px;">06/30/1994</span>
<span class="t" style="left:785.00px;top:429.50px;font-size:17.40px;line-height:24px;color:#2c2c2f;letter-spacing:0.800px;">PT00034712</span>
<div class="b" style="left:1034.50px;top:425.20px;width:48.50px;height:33.00px;background:#a0acc5;border-radius:5.0px;"></div>
<span class="t" style="left:1047.20px;top:430.28px;font-size:15.40px;line-height:22px;color:#1f1f24;letter-spacing:-0.882px;">IVF</span>
<span class="t" style="left:1227.30px;top:429.50px;font-size:17.40px;line-height:24px;color:#2c2c2f;letter-spacing:0.800px;">01/22/2025</span>
<span class="t" style="left:1440.70px;top:429.50px;font-size:17.40px;line-height:24px;color:#2c2c2f;letter-spacing:0.379px;">Reed Alexis</span>
<span class="t" style="left:1690.70px;top:429.50px;font-size:17.40px;line-height:24px;color:#2c2c2f;letter-spacing:0.252px;">Female</span>
<div class="b" style="left:104.00px;top:476.70px;width:15.00px;height:15.00px;border-radius:1.3px;border:1.400px solid #3b3a40;box-sizing:border-box;"></div>
<div class="b" style="left:161.00px;top:479.40px;width:10.00px;height:10.00px;background:#aa8b2b;border-radius:50%;"></div>
<span class="t" style="left:184.30px;top:472.00px;font-size:17.40px;line-height:24px;color:#2c2c2f;letter-spacing:1.024px;">24568</span>
<span class="t" style="left:361.60px;top:472.00px;font-size:17.40px;line-height:24px;color:#1f1f22;font-weight:700;letter-spacing:0.100px;">Parker, Avery</span>
<span class="t" style="left:611.20px;top:472.00px;font-size:17.40px;line-height:24px;color:#2c2c2f;letter-spacing:0.700px;">02/11/1995</span>
<span class="t" style="left:785.00px;top:472.00px;font-size:17.40px;line-height:24px;color:#2c2c2f;letter-spacing:0.800px;">PT00045190</span>
<div class="b" style="left:1034.50px;top:467.70px;width:48.50px;height:33.00px;background:#a0acc5;border-radius:5.0px;"></div>
<span class="t" style="left:1047.20px;top:472.78px;font-size:15.40px;line-height:22px;color:#1f1f24;letter-spacing:-0.882px;">IVF</span>
<span class="t" style="left:1227.30px;top:472.00px;font-size:17.40px;line-height:24px;color:#2c2c2f;letter-spacing:0.800px;">01/25/2025</span>
<span class="t" style="left:1440.70px;top:472.00px;font-size:17.40px;line-height:24px;color:#2c2c2f;letter-spacing:0.488px;">Lee Jamie</span>
<span class="t" style="left:1690.70px;top:472.00px;font-size:17.40px;line-height:24px;color:#2c2c2f;letter-spacing:0.252px;">Female</span>
<div class="b" style="left:104.00px;top:519.20px;width:15.00px;height:15.00px;border-radius:1.3px;border:1.400px solid #3b3a40;box-sizing:border-box;"></div>
<div class="b" style="left:161.00px;top:521.90px;width:10.00px;height:10.00px;background:#1f7d50;border-radius:50%;"></div>
<span class="t" style="left:184.30px;top:514.50px;font-size:17.40px;line-height:24px;color:#2c2c2f;letter-spacing:0.024px;">81749</span>
<span class="t" style="left:361.60px;top:514.50px;font-size:17.40px;line-height:24px;color:#1f1f22;font-weight:700;letter-spacing:0.100px;">Hayes, Dakota</span>
<span class="t" style="left:611.20px;top:514.50px;font-size:17.40px;line-height:24px;color:#2c2c2f;letter-spacing:0.700px;">10/09/1994</span>
<span class="t" style="left:785.00px;top:514.50px;font-size:17.40px;line-height:24px;color:#2c2c2f;letter-spacing:0.800px;">PT00056238</span>
<div class="b" style="left:1034.50px;top:510.20px;width:48.50px;height:33.00px;background:#a0acc5;border-radius:5.0px;"></div>
<span class="t" style="left:1047.20px;top:515.28px;font-size:15.40px;line-height:22px;color:#1f1f24;letter-spacing:-0.882px;">IVF</span>
<span class="t" style="left:1227.30px;top:514.50px;font-size:17.40px;line-height:24px;color:#2c2c2f;letter-spacing:0.800px;">01/28/2025</span>
<span class="t" style="left:1440.70px;top:514.50px;font-size:17.40px;line-height:24px;color:#2c2c2f;letter-spacing:0.661px;">Taylor Morgan</span>
<span class="t" style="left:1690.70px;top:514.50px;font-size:17.40px;line-height:24px;color:#2c2c2f;letter-spacing:0.252px;">Female</span>
<div class="b" style="left:104.00px;top:561.70px;width:15.00px;height:15.00px;border-radius:1.3px;border:1.400px solid #3b3a40;box-sizing:border-box;"></div>
<div class="b" style="left:161.00px;top:564.40px;width:10.00px;height:10.00px;background:#aa8b2b;border-radius:50%;"></div>
<span class="t" style="left:184.30px;top:557.00px;font-size:17.40px;line-height:24px;color:#2c2c2f;letter-spacing:1.149px;">53692</span>
<span class="t" style="left:361.60px;top:557.00px;font-size:17.40px;line-height:24px;color:#1f1f22;font-weight:700;letter-spacing:0.100px;">Brooks, Rowan</span>
<span class="t" style="left:611.20px;top:557.00px;font-size:17.40px;line-height:24px;color:#2c2c2f;letter-spacing:0.700px;">04/26/1993</span>
<span class="t" style="left:785.00px;top:557.00px;font-size:17.40px;line-height:24px;color:#2c2c2f;letter-spacing:0.800px;">PT00067345</span>
<div class="b" style="left:1034.50px;top:552.70px;width:48.50px;height:33.00px;background:#a0acc5;border-radius:5.0px;"></div>
<span class="t" style="left:1047.20px;top:557.78px;font-size:15.40px;line-height:22px;color:#1f1f24;letter-spacing:-0.882px;">IVF</span>
<span class="t" style="left:1227.30px;top:557.00px;font-size:17.40px;line-height:24px;color:#2c2c2f;letter-spacing:0.800px;">02/01/2025</span>
<span class="t" style="left:1440.70px;top:557.00px;font-size:17.40px;line-height:24px;color:#2c2c2f;letter-spacing:-0.056px;">Jordan Anderson</span>
<span class="t" style="left:1690.70px;top:557.00px;font-size:17.40px;line-height:24px;color:#2c2c2f;letter-spacing:1.022px;">Male</span>
<div class="b" style="left:104.00px;top:604.20px;width:15.00px;height:15.00px;border-radius:1.3px;border:1.400px solid #3b3a40;box-sizing:border-box;"></div>
<div class="b" style="left:161.00px;top:606.90px;width:10.00px;height:10.00px;background:#1f7d50;border-radius:50%;"></div>
<span class="t" style="left:184.30px;top:599.50px;font-size:17.40px;line-height:24px;color:#2c2c2f;letter-spacing:0.024px;">76421</span>
<span class="t" style="left:361.60px;top:599.50px;font-size:17.40px;line-height:24px;color:#1f1f22;font-weight:700;letter-spacing:0.100px;">Ellis, Skyler</span>
<span class="t" style="left:611.20px;top:599.50px;font-size:17.40px;line-height:24px;color:#2c2c2f;letter-spacing:0.700px;">07/14/1992</span>
<span class="t" style="left:785.00px;top:599.50px;font-size:17.40px;line-height:24px;color:#2c2c2f;letter-spacing:0.800px;">PT00078462</span>
<div class="b" style="left:1034.50px;top:595.20px;width:48.50px;height:33.00px;background:#a0acc5;border-radius:5.0px;"></div>
<span class="t" style="left:1047.20px;top:600.28px;font-size:15.40px;line-height:22px;color:#1f1f24;letter-spacing:-0.882px;">IVF</span>
<span class="t" style="left:1227.30px;top:599.50px;font-size:17.40px;line-height:24px;color:#2c2c2f;letter-spacing:0.800px;">02/03/2025</span>
<span class="t" style="left:1440.70px;top:599.50px;font-size:17.40px;line-height:24px;color:#2c2c2f;letter-spacing:0.184px;">Quinn Riley</span>
<span class="t" style="left:1690.70px;top:599.50px;font-size:17.40px;line-height:24px;color:#2c2c2f;letter-spacing:1.022px;">Male</span>
<div class="b" style="left:104.00px;top:646.70px;width:15.00px;height:15.00px;border-radius:1.3px;border:1.400px solid #3b3a40;box-sizing:border-box;"></div>
<div class="b" style="left:161.00px;top:649.40px;width:10.00px;height:10.00px;background:#aa8b2b;border-radius:50%;"></div>
<span class="t" style="left:184.30px;top:642.00px;font-size:17.40px;line-height:24px;color:#2c2c2f;letter-spacing:1.024px;">39284</span>
<span class="t" style="left:361.60px;top:642.00px;font-size:17.40px;line-height:24px;color:#1f1f22;font-weight:700;letter-spacing:0.100px;">Morgan, Reese</span>
<span class="t" style="left:611.20px;top:642.00px;font-size:17.40px;line-height:24px;color:#2c2c2f;letter-spacing:0.700px;">09/02/1995</span>
<span class="t" style="left:785.00px;top:642.00px;font-size:17.40px;line-height:24px;color:#2c2c2f;letter-spacing:0.800px;">PT00089571</span>
<div class="b" style="left:1034.50px;top:637.70px;width:48.50px;height:33.00px;background:#a0acc5;border-radius:5.0px;"></div>
<span class="t" style="left:1047.20px;top:642.78px;font-size:15.40px;line-height:22px;color:#1f1f24;letter-spacing:-0.882px;">IVF</span>
<span class="t" style="left:1227.30px;top:642.00px;font-size:17.40px;line-height:24px;color:#2c2c2f;letter-spacing:0.800px;">02/06/2025</span>
<span class="t" style="left:1440.70px;top:642.00px;font-size:17.40px;line-height:24px;color:#2c2c2f;letter-spacing:0.548px;">Casey Jordan</span>
<span class="t" style="left:1690.70px;top:642.00px;font-size:17.40px;line-height:24px;color:#2c2c2f;letter-spacing:0.252px;">Female</span>
<div class="b" style="left:104.00px;top:689.20px;width:15.00px;height:15.00px;border-radius:1.3px;border:1.400px solid #3b3a40;box-sizing:border-box;"></div>
<div class="b" style="left:161.00px;top:691.90px;width:10.00px;height:10.00px;background:#aa8b2b;border-radius:50%;"></div>
<span class="t" style="left:184.30px;top:684.50px;font-size:17.40px;line-height:24px;color:#2c2c2f;letter-spacing:0.449px;">15830</span>
<span class="t" style="left:361.60px;top:684.50px;font-size:17.40px;line-height:24px;color:#1f1f22;font-weight:700;letter-spacing:0.100px;">Bailey, Harper</span>
<span class="t" style="left:611.20px;top:684.50px;font-size:17.40px;line-height:24px;color:#2c2c2f;letter-spacing:0.700px;">11/19/1994</span>
<span class="t" style="left:785.00px;top:684.50px;font-size:17.40px;line-height:24px;color:#2c2c2f;letter-spacing:0.800px;">PT00091683</span>
<div class="b" style="left:1034.50px;top:680.20px;width:48.50px;height:33.00px;background:#a0acc5;border-radius:5.0px;"></div>
<span class="t" style="left:1047.20px;top:685.28px;font-size:15.40px;line-height:22px;color:#1f1f24;letter-spacing:-0.882px;">IVF</span>
<span class="t" style="left:1227.30px;top:684.50px;font-size:17.40px;line-height:24px;color:#2c2c2f;letter-spacing:0.800px;">02/08/2025</span>
<span class="t" style="left:1440.70px;top:684.50px;font-size:17.40px;line-height:24px;color:#2c2c2f;letter-spacing:0.585px;">Ethan Carter</span>
<span class="t" style="left:1690.70px;top:684.50px;font-size:17.40px;line-height:24px;color:#2c2c2f;letter-spacing:0.252px;">Female</span>
<div class="b" style="left:104.00px;top:731.70px;width:15.00px;height:15.00px;border-radius:1.3px;border:1.400px solid #3b3a40;box-sizing:border-box;"></div>
<div class="b" style="left:161.00px;top:734.40px;width:10.00px;height:10.00px;background:#1f7d50;border-radius:50%;"></div>
<span class="t" style="left:184.30px;top:727.00px;font-size:17.40px;line-height:24px;color:#2c2c2f;letter-spacing:0.874px;">47056</span>
<span class="t" style="left:361.60px;top:727.00px;font-size:17.40px;line-height:24px;color:#1f1f22;font-weight:700;letter-spacing:0.230px;">Smith, Peyton</span>
<span class="t" style="left:611.20px;top:727.00px;font-size:17.40px;line-height:24px;color:#2c2c2f;letter-spacing:0.688px;">03/15/1994</span>
<span class="t" style="left:785.00px;top:727.00px;font-size:17.40px;line-height:24px;color:#2c2c2f;letter-spacing:0.681px;">PT00098134</span>
<div class="b" style="left:1034.50px;top:722.70px;width:48.50px;height:33.00px;background:#a0acc5;border-radius:5.0px;"></div>
<span class="t" style="left:1047.20px;top:727.78px;font-size:15.40px;line-height:22px;color:#1f1f24;letter-spacing:-0.882px;">IVF</span>
<span class="t" style="left:1227.30px;top:727.00px;font-size:17.40px;line-height:24px;color:#2c2c2f;letter-spacing:0.966px;">03/01/2025</span>
<span class="t" style="left:1440.70px;top:727.00px;font-size:17.40px;line-height:24px;color:#2c2c2f;letter-spacing:0.663px;">Smith Peyton</span>
<span class="t" style="left:1690.70px;top:727.00px;font-size:17.40px;line-height:24px;color:#2c2c2f;letter-spacing:0.252px;">Female</span>
<div class="b" style="left:104.00px;top:774.20px;width:15.00px;height:15.00px;border-radius:1.3px;border:1.400px solid #3b3a40;box-sizing:border-box;"></div>
<div class="b" style="left:161.00px;top:776.90px;width:10.00px;height:10.00px;background:#aa8b2b;border-radius:50%;"></div>
<span class="t" style="left:184.30px;top:769.50px;font-size:17.40px;line-height:24px;color:#2c2c2f;letter-spacing:1.024px;">82394</span>
<span class="t" style="left:361.60px;top:769.50px;font-size:17.40px;line-height:24px;color:#1f1f22;font-weight:700;letter-spacing:0.318px;">Casey, Jordan</span>
<span class="t" style="left:611.20px;top:769.50px;font-size:17.40px;line-height:24px;color:#2c2c2f;letter-spacing:0.877px;">07/23/1995</span>
<span class="t" style="left:785.00px;top:769.50px;font-size:17.40px;line-height:24px;color:#2c2c2f;letter-spacing:0.592px;">PT00301752</span>
<div class="b" style="left:1034.50px;top:765.20px;width:155.00px;height:33.00px;background:#aec3c3;border-radius:5.0px;"></div>
<span class="t" style="left:1047.20px;top:770.28px;font-size:15.40px;line-height:22px;color:#1f1f24;letter-spacing:0.079px;">Frozen Oocyte IVF</span>
<span class="t" style="left:1227.30px;top:769.50px;font-size:17.40px;line-height:24px;color:#2c2c2f;letter-spacing:1.266px;">02/09/2025</span>
<span class="t" style="left:1440.70px;top:769.50px;font-size:17.40px;line-height:24px;color:#2c2c2f;letter-spacing:0.548px;">Casey Jordan</span>
<span class="t" style="left:1690.70px;top:769.50px;font-size:17.40px;line-height:24px;color:#2c2c2f;letter-spacing:0.252px;">Female</span>
<div class="b" style="left:104.00px;top:816.70px;width:15.00px;height:15.00px;border-radius:1.3px;border:1.400px solid #3b3a40;box-sizing:border-box;"></div>
<div class="b" style="left:161.00px;top:819.40px;width:10.00px;height:10.00px;background:#1f7d50;border-radius:50%;"></div>
<span class="t" style="left:184.30px;top:812.00px;font-size:17.40px;line-height:24px;color:#2c2c2f;letter-spacing:0.024px;">81749</span>
<span class="t" style="left:361.60px;top:812.00px;font-size:17.40px;line-height:24px;color:#1f1f22;font-weight:700;letter-spacing:-0.003px;">Quinn, Riley</span>
<span class="t" style="left:611.20px;top:812.00px;font-size:17.40px;line-height:24px;color:#2c2c2f;letter-spacing:0.599px;">11/08/1994</span>
<span class="t" style="left:785.00px;top:812.00px;font-size:17.40px;line-height:24px;color:#2c2c2f;letter-spacing:0.781px;">PT00092641</span>
<div class="b" style="left:1034.50px;top:807.70px;width:137.30px;height:33.00px;background:#bba5c1;border-radius:5.0px;"></div>
<span class="t" style="left:1047.20px;top:812.78px;font-size:15.40px;line-height:22px;color:#1f1f24;letter-spacing:0.260px;">Oocyte Banking</span>
<span class="t" style="left:1227.30px;top:812.00px;font-size:17.40px;line-height:24px;color:#2c2c2f;letter-spacing:0.722px;">01/14/2025</span>
<span class="t" style="left:1440.70px;top:812.00px;font-size:17.40px;line-height:24px;color:#2c2c2f;letter-spacing:0.184px;">Quinn Riley</span>
<span class="t" style="left:1690.70px;top:812.00px;font-size:17.40px;line-height:24px;color:#2c2c2f;letter-spacing:0.252px;">Female</span>
<div class="b" style="left:104.00px;top:859.20px;width:15.00px;height:15.00px;border-radius:1.3px;border:1.400px solid #3b3a40;box-sizing:border-box;"></div>
<div class="b" style="left:161.00px;top:861.90px;width:10.00px;height:10.00px;background:#aa8b2b;border-radius:50%;"></div>
<span class="t" style="left:184.30px;top:854.50px;font-size:17.40px;line-height:24px;color:#2c2c2f;letter-spacing:0.024px;">21875</span>
<span class="t" style="left:361.60px;top:854.50px;font-size:17.40px;line-height:24px;color:#1f1f22;font-weight:700;letter-spacing:0.222px;">Reed, Alexis</span>
<span class="t" style="left:611.20px;top:854.50px;font-size:17.40px;line-height:24px;color:#2c2c2f;letter-spacing:0.688px;">02/15/1995</span>
<span class="t" style="left:785.00px;top:854.50px;font-size:17.40px;line-height:24px;color:#2c2c2f;letter-spacing:0.937px;">PT00257390</span>
<div class="b" style="left:1034.50px;top:850.20px;width:137.30px;height:33.00px;background:#bba5c1;border-radius:5.0px;"></div>
<span class="t" style="left:1047.20px;top:855.28px;font-size:15.40px;line-height:22px;color:#1f1f24;letter-spacing:0.260px;">Oocyte Banking</span>
<span class="t" style="left:1227.30px;top:854.50px;font-size:17.40px;line-height:24px;color:#2c2c2f;letter-spacing:1.266px;">03/25/2025</span>
<span class="t" style="left:1440.70px;top:854.50px;font-size:17.40px;line-height:24px;color:#2c2c2f;letter-spacing:0.379px;">Reed Alexis</span>
<span class="t" style="left:1690.70px;top:854.50px;font-size:17.40px;line-height:24px;color:#2c2c2f;letter-spacing:0.252px;">Female</span>
<div class="b" style="left:104.00px;top:901.70px;width:15.00px;height:15.00px;border-radius:1.3px;border:1.400px solid #3b3a40;box-sizing:border-box;"></div>
<div class="b" style="left:161.00px;top:904.40px;width:10.00px;height:10.00px;background:#aa8b2b;border-radius:50%;"></div>
<span class="t" style="left:184.30px;top:897.00px;font-size:17.40px;line-height:24px;color:#2c2c2f;letter-spacing:1.024px;">93482</span>
<span class="t" style="left:361.60px;top:897.00px;font-size:17.40px;line-height:24px;color:#1f1f22;font-weight:700;letter-spacing:0.244px;">Lee, Jamie</span>
<span class="t" style="left:611.20px;top:897.00px;font-size:17.40px;line-height:24px;color:#2c2c2f;letter-spacing:1.033px;">05/02/1994</span>
<span class="t" style="left:785.00px;top:897.00px;font-size:17.40px;line-height:24px;color:#2c2c2f;letter-spacing:0.781px;">PT00138462</span>
<div class="b" style="left:1034.50px;top:892.70px;width:52.70px;height:33.00px;background:#a8c2a1;border-radius:5.0px;"></div>
<span class="t" style="left:1047.20px;top:897.78px;font-size:15.40px;line-height:22px;color:#1f1f24;letter-spacing:0.157px;">IVM</span>
<span class="t" style="left:1227.30px;top:897.00px;font-size:17.40px;line-height:24px;color:#2c2c2f;letter-spacing:1.322px;">02/04/2025</span>
<span class="t" style="left:1440.70px;top:897.00px;font-size:17.40px;line-height:24px;color:#2c2c2f;letter-spacing:0.488px;">Lee Jamie</span>
<span class="t" style="left:1690.70px;top:897.00px;font-size:17.40px;line-height:24px;color:#2c2c2f;letter-spacing:0.252px;">Female</span>
<div class="b" style="left:104.00px;top:944.20px;width:15.00px;height:15.00px;border-radius:1.3px;border:1.400px solid #3b3a40;box-sizing:border-box;"></div>
<div class="b" style="left:161.00px;top:946.90px;width:10.00px;height:10.00px;background:#1f7d50;border-radius:50%;"></div>
<span class="t" style="left:184.30px;top:939.50px;font-size:17.40px;line-height:24px;color:#2c2c2f;letter-spacing:0.874px;">67239</span>
<span class="t" style="left:361.60px;top:939.50px;font-size:17.40px;line-height:24px;color:#1f1f22;font-weight:700;letter-spacing:0.317px;">Taylor, Morgan</span>
<span class="t" style="left:611.20px;top:939.50px;font-size:17.40px;line-height:24px;color:#2c2c2f;letter-spacing:0.766px;">09/18/1995</span>
<span class="t" style="left:785.00px;top:939.50px;font-size:17.40px;line-height:24px;color:#2c2c2f;letter-spacing:0.592px;">PT00081749</span>
<div class="b" style="left:1034.50px;top:935.20px;width:48.50px;height:33.00px;background:#a0acc5;border-radius:5.0px;"></div>
<span class="t" style="left:1047.20px;top:940.28px;font-size:15.40px;line-height:22px;color:#1f1f24;letter-spacing:-0.882px;">IVF</span>
<span class="t" style="left:1227.30px;top:939.50px;font-size:17.40px;line-height:24px;color:#2c2c2f;letter-spacing:1.011px;">03/12/2025</span>
<span class="t" style="left:1440.70px;top:939.50px;font-size:17.40px;line-height:24px;color:#2c2c2f;letter-spacing:0.661px;">Taylor Morgan</span>
<span class="t" style="left:1690.70px;top:939.50px;font-size:17.40px;line-height:24px;color:#2c2c2f;letter-spacing:0.252px;">Female</span>
<div class="b" style="left:104.00px;top:986.70px;width:15.00px;height:15.00px;border-radius:1.3px;border:1.400px solid #3b3a40;box-sizing:border-box;"></div>
<div class="b" style="left:161.00px;top:989.40px;width:10.00px;height:10.00px;background:#1f7d50;border-radius:50%;"></div>
<span class="t" style="left:184.30px;top:982.00px;font-size:17.40px;line-height:24px;color:#2c2c2f;letter-spacing:0.024px;">81749</span>
<span class="t" style="left:361.60px;top:982.00px;font-size:17.40px;line-height:24px;color:#1f1f22;font-weight:700;letter-spacing:-0.003px;">Quinn, Riley</span>
<span class="t" style="left:611.20px;top:982.00px;font-size:17.40px;line-height:24px;color:#2c2c2f;letter-spacing:1.066px;">04/29/1994</span>
<span class="t" style="left:785.00px;top:982.00px;font-size:17.40px;line-height:24px;color:#2c2c2f;letter-spacing:0.737px;">PT00326108</span>
<div class="b" style="left:1034.50px;top:977.70px;width:48.50px;height:33.00px;background:#a0acc5;border-radius:5.0px;"></div>
<span class="t" style="left:1047.20px;top:982.78px;font-size:15.40px;line-height:22px;color:#1f1f24;letter-spacing:-0.882px;">IVF</span>
<span class="t" style="left:1227.30px;top:982.00px;font-size:17.40px;line-height:24px;color:#2c2c2f;letter-spacing:0.955px;">01/20/2025</span>
<span class="t" style="left:1440.70px;top:982.00px;font-size:17.40px;line-height:24px;color:#2c2c2f;letter-spacing:0.184px;">Quinn Riley</span>
<span class="t" style="left:1690.70px;top:982.00px;font-size:17.40px;line-height:24px;color:#2c2c2f;letter-spacing:0.252px;">Female</span>
<div class="b" style="left:1784.00px;top:879.40px;width:86.00px;height:86.00px;background:#be4529;border-radius:50%;box-shadow:0 4px 10px rgba(0,0,0,.20);"></div>
<div class="b" style="left:1814.50px;top:921.80px;width:26.00px;height:2.20px;background:#e3d0c9;"></div>
<div class="b" style="left:1826.40px;top:909.90px;width:2.20px;height:26.00px;background:#e3d0c9;"></div>
<div class="b" style="left:354.50px;top:287.70px;width:1211.60px;height:453.60px;background:#ffffff;border-radius:9.0px;"></div>
<span class="t" style="left:392.60px;top:322.29px;font-size:25.50px;line-height:36px;color:#0f0f14;font-weight:700;letter-spacing:-0.170px;">Export to Registry</span>
<svg class="b" style="left:1457.40px;top:328.60px;" width="22.80" height="22.80" viewBox="0 0 24 24"><g fill="none" stroke="#222226" stroke-width="1.750" stroke-linecap="butt" stroke-linejoin="miter"><path d="M3.150 12.700 A8.850 8.850 0 0 1 20.100 8.400"/><path d="M20.850 3.700 V8.350 H16.300"/><path d="M20.850 11.400 A8.850 8.850 0 0 1 3.900 15.700"/><path d="M3.150 20.300 V15.850 H7.700" transform="translate(1,0)"/></g></svg>
<svg class="b" style="left:1503.70px;top:330.10px;" width="20.00" height="20.00" viewBox="0 0 20 20"><path d="M2 2 L18 18 M18 2 L2 18" stroke="#141418" stroke-width="1.950" stroke-linecap="butt"/></svg>
<span class="t" style="left:392.60px;top:394.80px;font-size:17.80px;line-height:25px;color:#1b1b20;letter-spacing:0.406px;">Total Selected Cycles: 3</span>
<div class="b" style="left:392.30px;top:432.70px;width:1136.30px;height:52.20px;background:#e9dff6;"></div>
<span class="t" style="left:423.00px;top:446.50px;font-size:17.50px;line-height:24px;color:#1b1533;transform:translateX(-50%);-webkit-text-stroke:0.600px #1b1533;">#</span>
<div class="b" style="left:453.80px;top:448.40px;width:1.00px;height:23.30px;background:#d9cdea;"></div>
<span class="t" style="left:475.20px;top:446.50px;font-size:17.50px;line-height:24px;color:#1b1533;letter-spacing:0.524px;-webkit-text-stroke:0.600px #1b1533;">Cycle ID</span>
<svg class="b" style="left:594.50px;top:448.80px;" width="12.00" height="20.00" viewBox="0 0 12 20"><path d="M6 1.600 L11 8 H1 Z M6 18.400 L1 12 H11 Z" fill="#a49bb3"/></svg>
<div class="b" style="left:864.30px;top:448.40px;width:1.00px;height:23.30px;background:#d9cdea;"></div>
<span class="t" style="left:885.00px;top:446.50px;font-size:17.50px;line-height:24px;color:#1b1533;letter-spacing:0.949px;-webkit-text-stroke:0.600px #1b1533;">Cycle Type</span>
<svg class="b" style="left:1087.00px;top:448.80px;" width="12.00" height="20.00" viewBox="0 0 12 20"><path d="M6 1.600 L11 8 H1 Z M6 18.400 L1 12 H11 Z" fill="#a49bb3"/></svg>
<div class="b" style="left:1119.00px;top:448.40px;width:1.00px;height:23.30px;background:#d9cdea;"></div>
<span class="t" style="left:1140.50px;top:446.50px;font-size:17.50px;line-height:24px;color:#1b1533;letter-spacing:0.834px;-webkit-text-stroke:0.600px #1b1533;">Start Date</span>
<svg class="b" style="left:1342.00px;top:448.80px;" width="12.00" height="20.00" viewBox="0 0 12 20"><path d="M6 1.600 L11 8 H1 Z M6 18.400 L1 12 H11 Z" fill="#a49bb3"/></svg>
<div class="b" style="left:1374.40px;top:448.40px;width:1.00px;height:23.30px;background:#d9cdea;"></div>
<span class="t" style="left:1395.80px;top:446.50px;font-size:17.50px;line-height:24px;color:#1b1533;letter-spacing:0.907px;-webkit-text-stroke:0.600px #1b1533;">Validations</span>
<svg class="b" style="left:1495.70px;top:448.80px;" width="12.00" height="20.00" viewBox="0 0 12 20"><path d="M6 1.600 L11 8 H1 Z M6 18.400 L1 12 H11 Z" fill="#a49bb3"/></svg>
<span class="t" style="left:423.50px;top:494.90px;font-size:17.60px;line-height:25px;color:#2d2d33;transform:translateX(-50%);">1</span>
<span class="t" style="left:475.20px;top:492.30px;font-size:17.60px;line-height:25px;color:#1f1f25;letter-spacing:1.139px;-webkit-text-stroke:0.250px #1f1f25;">CYC-2024-02584</span>
<span class="t" style="left:885.00px;top:494.90px;font-size:17.60px;line-height:25px;color:#2d2d33;letter-spacing:0.300px;">OB</span>
<span class="t" style="left:1140.50px;top:494.90px;font-size:17.60px;line-height:25px;color:#2d2d33;letter-spacing:0.634px;">10/01/2025</span>
<svg class="b" style="left:1396.80px;top:493.50px;" width="26.00" height="26.00" viewBox="0 0 26 26"><path d="M8.600 1.600 H17.400 L24.400 8.600 V17.400 L17.400 24.400 H8.600 L1.600 17.400 V8.600 Z" fill="none" stroke="#f0a33a" stroke-width="1.700" stroke-linejoin="round"/><path d="M13 7.400 V15" stroke="#f0a33a" stroke-width="1.900" stroke-linecap="round"/><circle cx="13" cy="18.600" r="1.200" fill="#f0a33a"/></svg>
<span class="t" style="left:423.50px;top:537.40px;font-size:17.60px;line-height:25px;color:#2d2d33;transform:translateX(-50%);">2</span>
<span class="t" style="left:475.20px;top:534.80px;font-size:17.60px;line-height:25px;color:#1f1f25;letter-spacing:1.024px;-webkit-text-stroke:0.250px #1f1f25;">CYC-2024-04314</span>
<span class="t" style="left:885.00px;top:537.40px;font-size:17.60px;line-height:25px;color:#2d2d33;letter-spacing:0.300px;">IVF</span>
<span class="t" style="left:1140.50px;top:537.40px;font-size:17.60px;line-height:25px;color:#2d2d33;letter-spacing:0.634px;">12/05/2007</span>
<svg class="b" style="left:1396.80px;top:536.00px;" width="26.00" height="26.00" viewBox="0 0 26 26"><circle cx="13" cy="13" r="11.600" fill="none" stroke="#2fa56a" stroke-width="1.600"/><path d="M7.600 13.400 L11.400 17.200 L18.600 9.400" fill="none" stroke="#2fa56a" stroke-width="1.700" stroke-linecap="round" stroke-linejoin="round"/></svg>
<span class="t" style="left:423.50px;top:579.90px;font-size:17.60px;line-height:25px;color:#2d2d33;transform:translateX(-50%);">3</span>
<span class="t" style="left:475.20px;top:577.30px;font-size:17.60px;line-height:25px;color:#1f1f25;letter-spacing:1.178px;-webkit-text-stroke:0.250px #1f1f25;">CYC-2024-04542</span>
<span class="t" style="left:885.00px;top:579.90px;font-size:17.60px;line-height:25px;color:#2d2d33;letter-spacing:0.300px;">IVF</span>
<span class="t" style="left:1140.50px;top:579.90px;font-size:17.60px;line-height:25px;color:#2d2d33;letter-spacing:0.634px;">01/09/2008</span>
<svg class="b" style="left:1396.80px;top:578.50px;" width="26.00" height="26.00" viewBox="0 0 26 26"><path d="M8.600 1.600 H17.400 L24.400 8.600 V17.400 L17.400 24.400 H8.600 L1.600 17.400 V8.600 Z" fill="none" stroke="#f0a33a" stroke-width="1.700" stroke-linejoin="round"/><path d="M13 7.400 V15" stroke="#f0a33a" stroke-width="1.900" stroke-linecap="round"/><circle cx="13" cy="18.600" r="1.200" fill="#f0a33a"/></svg>
<span class="t" style="left:976.00px;top:665.20px;font-size:17.50px;line-height:24px;color:#e25b5b;font-weight:700;letter-spacing:0.280px;font-weight:600;">Cancel</span>
<div class="b" style="left:1072.30px;top:650.00px;width:311.40px;height:54.00px;background:#fff;border-radius:8.0px;border:1.500px solid #2a1c55;box-sizing:border-box;"></div>
<span class="t" style="left:1099.00px;top:665.80px;font-size:17.50px;line-height:24px;color:#1c1240;font-weight:700;letter-spacing:0.123px;">Export Only Completed Cycles</span>
<div class="b" style="left:1396.00px;top:650.00px;width:132.70px;height:54.00px;background:#2a0f4f;border-radius:8.0px;"></div>
<span class="t" style="left:1422.70px;top:665.80px;font-size:17.50px;line-height:24px;color:#ffffff;font-weight:700;letter-spacing:0.072px;">Export all</span>
</div></div></div>
</body></html>
